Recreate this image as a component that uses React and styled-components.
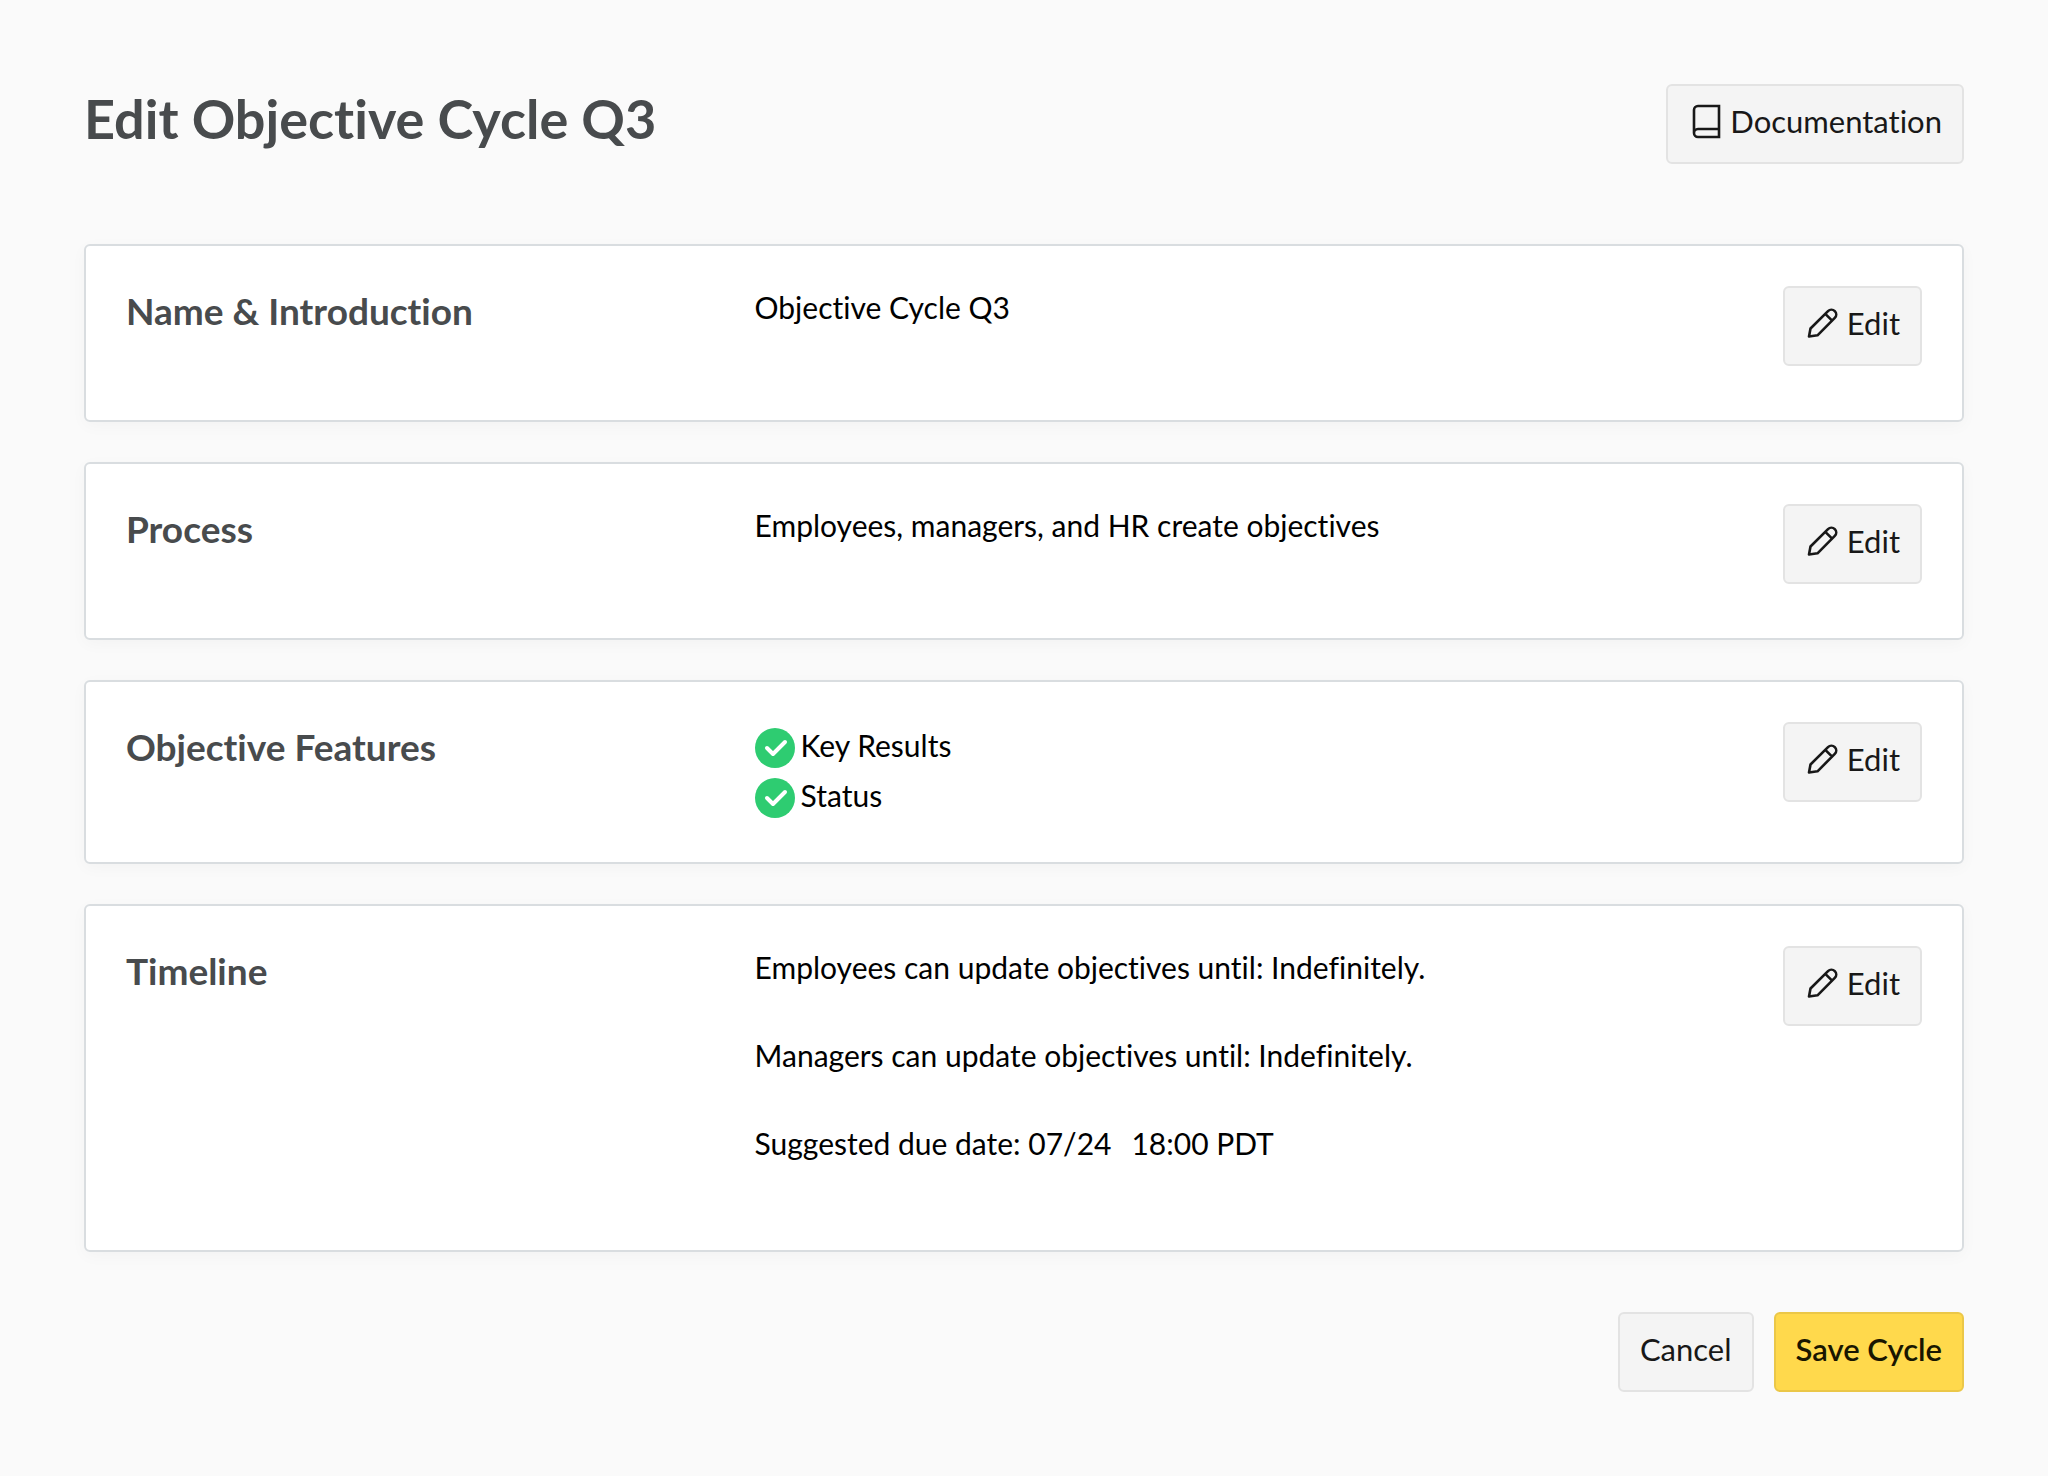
import React from 'react';
import styled, { createGlobalStyle } from 'styled-components';

const GlobalStyle = createGlobalStyle`
    *, *::before, *::after {
        box-sizing: border-box;
    }

    body {
        margin: 0;
        background: #FAFAFA;
        color: #000000;
        font-family: Lato, "Liberation Sans", sans-serif;
        font-size: 30px;
        font-variant-ligatures: none;
        line-height: 42px;
    }
`

const Page = styled.main`
    padding: 84px;
`

const Header = styled.header`
    display: flex;
    align-items: flex-start;
    justify-content: space-between;
    margin-bottom: 80px;
`

const Title = styled.h1`
    margin: 0;
    color: #484B4D;
    font-size: 54px;
    font-weight: 700;
    line-height: 70px;
`

const Button = styled.button`
    display: inline-flex;
    align-items: center;
    justify-content: center;
    gap: 6px;
    height: 80px;
    padding: 0 20px 6px;
    border: 2px solid ${props => props.$primary ? '#EBC748' : '#E3E3E3'};
    border-radius: 6px;
    background: ${props => props.$primary ? '#FFD94C' : '#F4F4F4'};
    color: ${props => props.$primary ? '#191600' : '#181818'};
    font-family: inherit;
    font-size: 31px;
    font-variant-ligatures: inherit;
    font-weight: ${props => props.$primary ? 600 : 400};
    line-height: 44px;
    cursor: pointer;
`

const Cards = styled.div`
    display: flex;
    flex-direction: column;
    gap: 40px;
`

const Card = styled.section`
    display: grid;
    grid-template-columns: 35% 1fr auto;
    align-items: start;
    padding: 40px;
    border: 2px solid #D9DDE0;
    border-radius: 6px;
    background: #FFFFFF;
    box-shadow: 0 4px 16px rgba(0, 0, 0, 0.03);
`

const CardTitle = styled.h2`
    margin: 0 0 44px;
    color: #484B4D;
    font-size: 37px;
    font-weight: 700;
    line-height: 50px;
`

const Text = styled.p`
    margin: 0 0 46px;
`

const Time = styled.span`
    margin-left: 20px;
`

const FeatureList = styled.ul`
    margin: 0;
    padding: 0;
    list-style: none;
`

const Feature = styled.li`
    display: flex;
    align-items: flex-end;
    gap: 6px;
    height: 50px;
    padding-bottom: 4px;
    line-height: 46px;
`

const Footer = styled.footer`
    display: flex;
    justify-content: flex-end;
    gap: 20px;
    margin-top: 60px;
`

const Icon = styled.svg`
    flex: none;
    width: 36px;
    height: 36px;
    fill: none;
    stroke: currentColor;
    stroke-width: 2.6;
    stroke-linejoin: round;
`

const Check = styled.svg`
    flex: none;
    width: 40px;
    height: 40px;
`

const BookIcon = () => (
    <Icon viewBox="0 0 36 36" aria-hidden="true">
        <path d="M31 3H10a4 4 0 0 0-4 4v23a4 4 0 0 0 4 4h21zM6 30a4 4 0 0 1 4-4h21" strokeLinejoin="miter" />
    </Icon>
)

const PencilIcon = () => (
    <Icon viewBox="0 0 36 36" aria-hidden="true">
        <path d="M4 31.5L5.5 23.5L23 6.1a4.8 4.8 0 0 1 6.8 6.8L12.5 30.3zM20.3 8.8L27.1 15.6" />
    </Icon>
)

const CheckIcon = () => (
    <Check viewBox="0 0 40 40" aria-hidden="true">
        <circle cx="20" cy="20" r="20" fill="#2ECC71" />
        <path d="M12 20l6 6l12-12" fill="none" stroke="#FFFFFF" strokeWidth="4" strokeLinecap="round" strokeLinejoin="round" />
    </Check>
)

const SummaryCard = ({ title, children }) => (
    <Card>
        <CardTitle>{title}</CardTitle>
        <div>{children}</div>
        <Button type="button" aria-label={`Edit ${title}`}><PencilIcon />Edit</Button>
    </Card>
)

export default function App() {
    return (
        <Page>
            <GlobalStyle />
            <Header>
                <Title>Edit Objective Cycle Q3</Title>
                <Button type="button"><BookIcon />Documentation</Button>
            </Header>

            <Cards>
                <SummaryCard title="Name & Introduction">
                    <Text>Objective Cycle Q3</Text>
                </SummaryCard>

                <SummaryCard title="Process">
                    <Text>Employees, managers, and HR create objectives</Text>
                </SummaryCard>

                <SummaryCard title="Objective Features">
                    <FeatureList>
                        <Feature><CheckIcon />Key Results</Feature>
                        <Feature><CheckIcon />Status</Feature>
                    </FeatureList>
                </SummaryCard>

                <SummaryCard title="Timeline">
                    <Text>Employees can update objectives until: Indefinitely.</Text>
                    <Text>Managers can update objectives until: Indefinitely.</Text>
                    <Text>Suggested due date: 07/24<Time>18:00 PDT</Time></Text>
                </SummaryCard>
            </Cards>

            <Footer>
                <Button type="button">Cancel</Button>
                <Button type="submit" $primary>Save Cycle</Button>
            </Footer>
        </Page>
    );
}
